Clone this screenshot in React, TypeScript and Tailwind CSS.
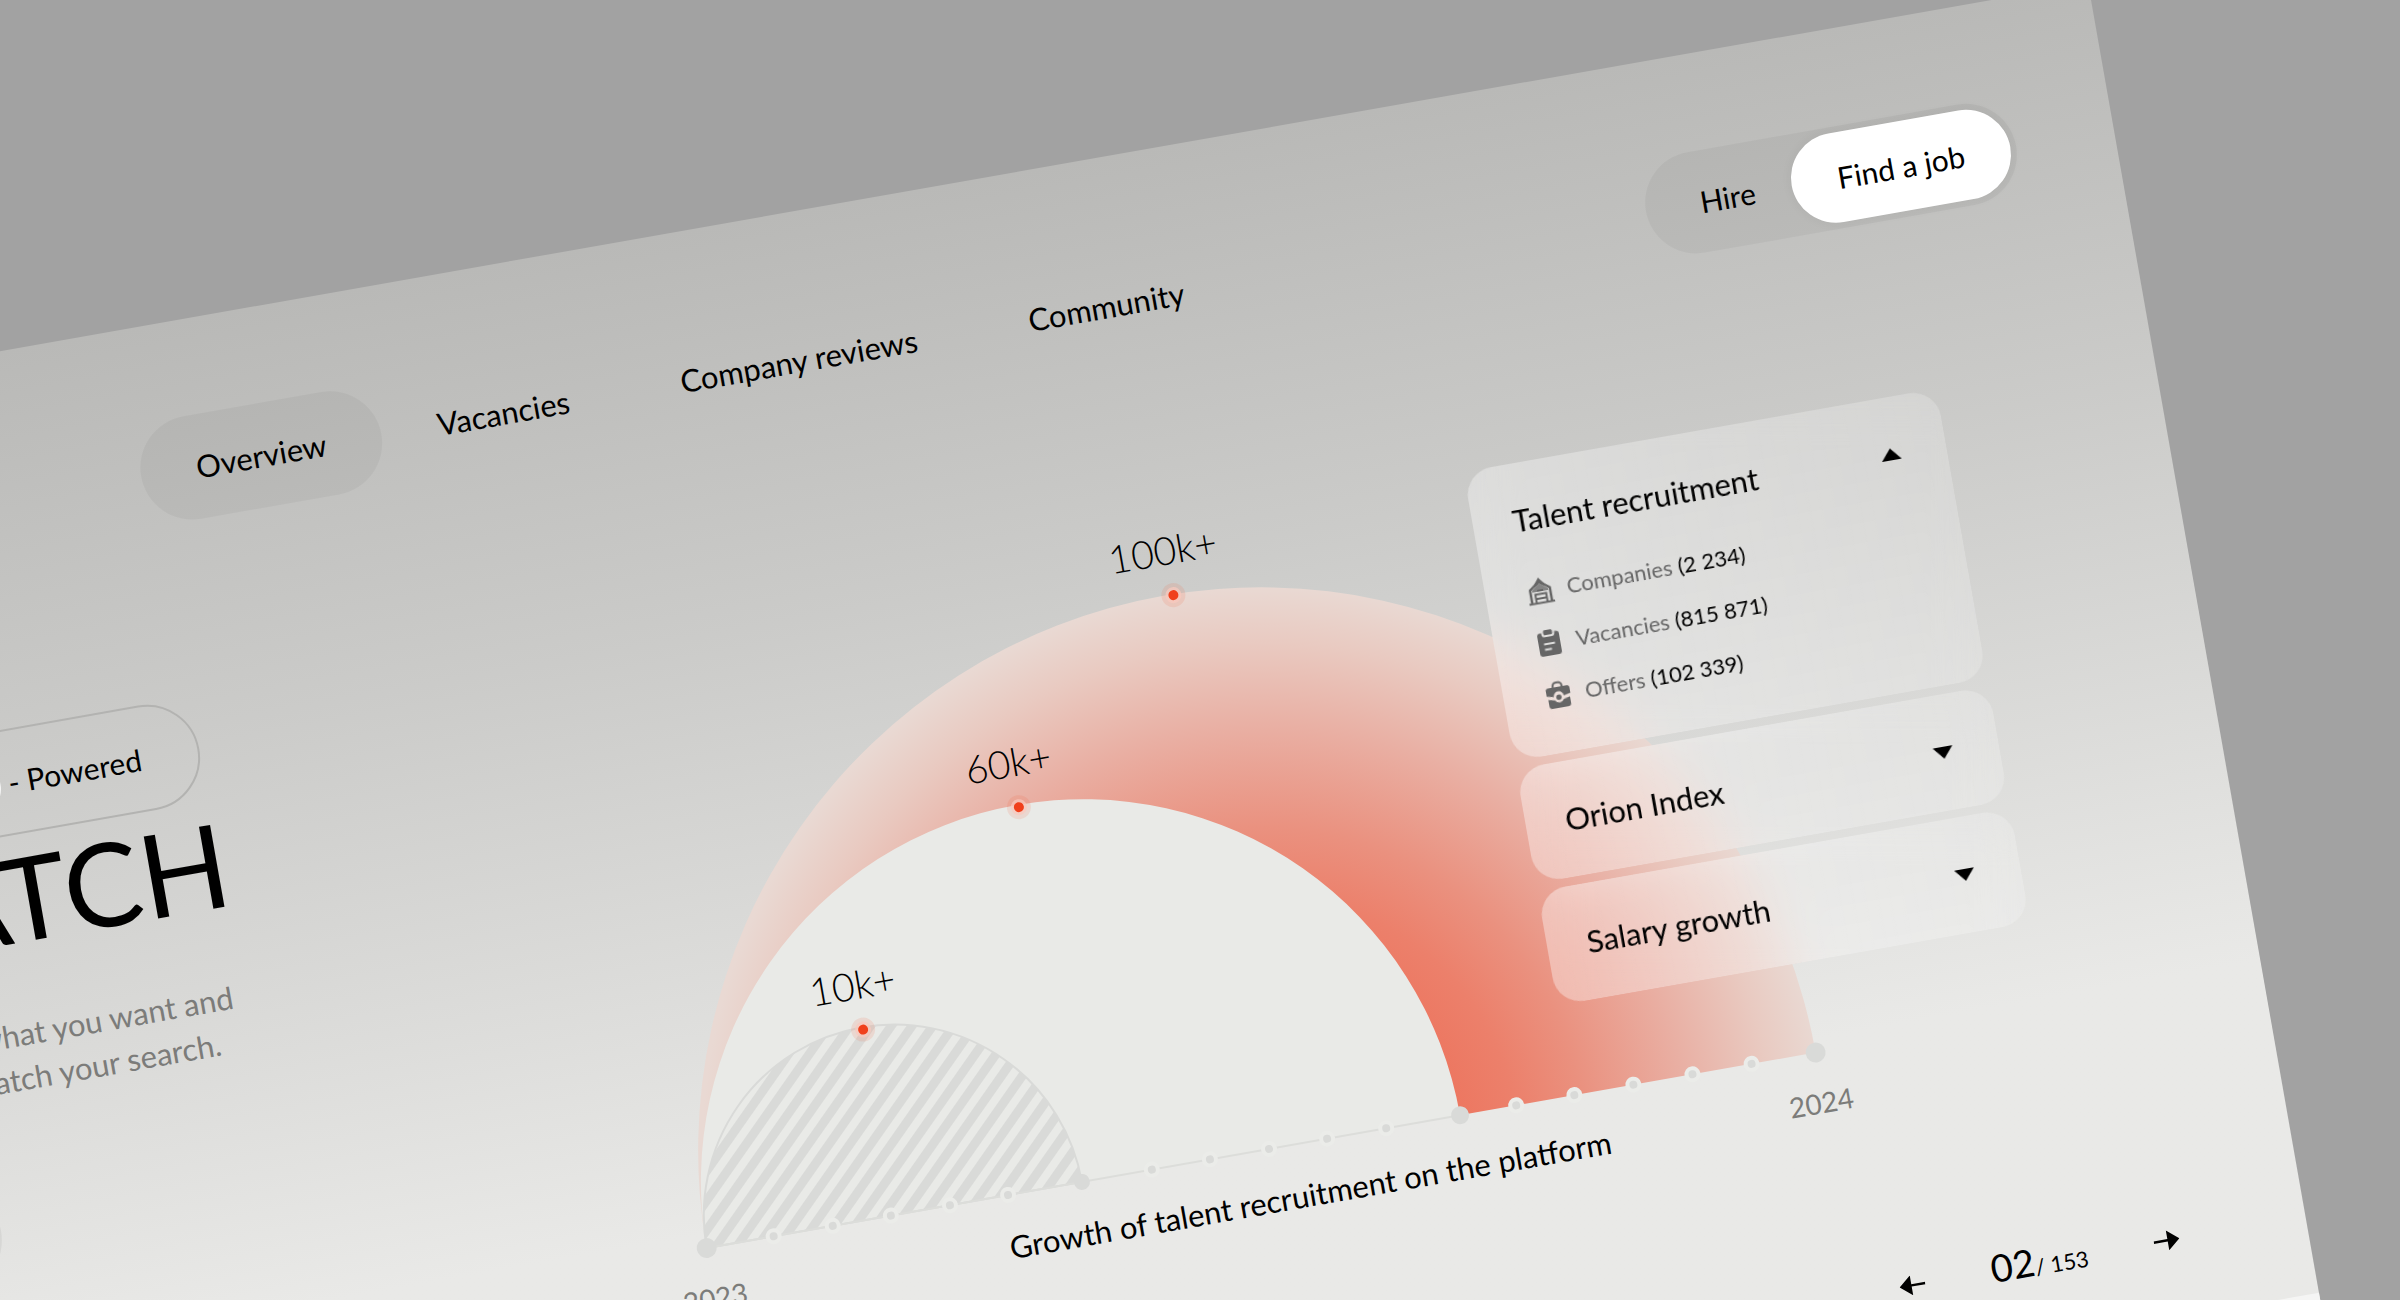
const navItems = ["Overview", "Vacancies", "Company reviews", "Community"];

const arcs = [
  { label: "10k+", x: 229, y: 445 },
  { label: "60k+", x: 421, y: 253 },
  { label: "100k+", x: 610, y: 71 },
];

const minorTicks = [105, 165, 224, 284, 343, 489, 548, 608, 667, 727, 859, 918, 978, 1038, 1098];

const majorTicks = [
  { x: 37, r: 10 },
  { x: 418, r: 8 },
  { x: 802, r: 9 },
  { x: 1163, r: 10 },
];

const CompaniesIcon = () => (
  <svg viewBox="0 0 26 28" className="h-7 w-[26px]" fill="none" aria-hidden="true">
    <path d="M3 27V12.500L13 5l10 7.500V27" stroke="currentColor" strokeWidth="2.500" />
    <path d="M8 7.500 13 1l5 6.500v3L13 7l-5 3.500z" fill="currentColor" />
    <path d="M13 7 5 13v2h16v-2z" fill="currentColor" opacity=".75" />
    <path d="M7.500 27v-9.500h11V27M7.500 22h11M10 14h6" stroke="currentColor" strokeWidth="2" />
    <path d="M0 26.500h26" stroke="currentColor" strokeWidth="2" />
  </svg>
);

const VacanciesIcon = () => (
  <svg viewBox="0 0 26 28" className="h-7 w-[26px]" aria-hidden="true">
    <path
      d="M5 3.500h1.500V5A3 3 0 0 0 9.500 8h7a3 3 0 0 0 3-3V3.500H21a3 3 0 0 1 3 3V24a3 3 0 0 1-3 3H5a3 3 0 0 1-3-3V6.500a3 3 0 0 1 3-3z"
      fill="currentColor"
    />
    <rect x="8.500" y="1" width="9" height="5" rx="1.500" fill="currentColor" />
    <path d="M7.500 15h11M7.500 20.500h7" stroke="#dcdcdb" strokeWidth="2" />
  </svg>
);

const OffersIcon = () => (
  <svg viewBox="0 0 26 28" className="h-7 w-[26px]" fill="none" aria-hidden="true">
    <path d="M8.500 7V5a3.500 3.500 0 0 1 3.500-3.500h2A3.500 3.500 0 0 1 17.500 5v2" stroke="currentColor" strokeWidth="2" />
    <path d="M3.500 6h19A2.500 2.500 0 0 1 25 8.500V14l-7 1.500a5 5 0 0 0-10 0L1 14V8.500A2.500 2.500 0 0 1 3.500 6z" fill="currentColor" />
    <path d="M2 17.500 8.500 19a5 5 0 0 0 9 0l6.500-1.500V24a3 3 0 0 1-3 3H5a3 3 0 0 1-3-3z" fill="currentColor" />
    <circle cx="13" cy="16.500" r="2.700" fill="currentColor" />
  </svg>
);

const Caret = ({ up }: { up?: boolean }) => (
  <svg viewBox="0 0 20 12" className="h-3 w-5" fill="currentColor" aria-hidden="true">
    <path d={up ? "M10 0 20 12H0z" : "M0 0h20L10 12z"} />
  </svg>
);

const PagerArrow = ({ left }: { left?: boolean }) => (
  <svg viewBox="0 0 26 20" className="h-5 w-[26px]" fill="currentColor" aria-hidden="true">
    <path d={left ? "M0 10 12 0v8.800h14v2.400H12V20z" : "M26 10 14 0v8.800H0v2.400h14V20z"} />
  </svg>
);

const stats = [
  { name: "Companies", count: "(2 234)", icon: <CompaniesIcon /> },
  { name: "Vacancies", count: "(815 871)", icon: <VacanciesIcon /> },
  { name: "Offers", count: "(102 339)", icon: <OffersIcon /> },
];

const cardClass = "rounded-[28px] bg-linear-to-r from-white/35 to-white/20 backdrop-blur-xl";

const Header = () => {
  return (
    <header className="flex items-center justify-between pt-24 pl-[397px] pr-[99px]">
      <nav className="flex gap-px">
        {navItems.map((item, i) => (
          <a
            key={item}
            href="#"
            className={
              i === 0
                ? "flex h-[104px] items-center rounded-full bg-black/4 px-14"
                : "flex h-[104px] items-center px-14"
            }
          >
            {item}
          </a>
        ))}
      </nav>
      <div className="flex rounded-full bg-black/4 p-[6px]">
        <button type="button" className="h-[90px] w-[142px] rounded-full pl-3 text-[30px]">
          Hire
        </button>
        <button
          type="button"
          className="h-[90px] w-[222px] rounded-full bg-white text-[30px] shadow-[0_0_12px_rgba(0,0,0,0.05)]"
        >
          Find a job
        </button>
      </div>
    </header>
  );
};

const Intro = () => {
  return (
    <section className="flex w-[407px] shrink-0 flex-col items-end">
      <p className="flex h-[106px] items-center gap-2 rounded-full border-2 border-[#b3b3b1] pr-[57px] pl-6 text-[30px]">
        <span className="flex size-16 items-center justify-center rounded-full bg-white">AI</span>
        <span>- Powered</span>
      </p>
      <h1 className="mt-[5px] -mr-2 text-[116px] leading-[116px]">MATCH</h1>
      <p className="mt-[54px] mr-[10px] leading-[44px] whitespace-nowrap text-[#7c7c7a]">
        Say what you want and
        <br />
        AI match your search.
      </p>
      <button
        type="button"
        aria-label="Start search"
        className="mt-[72px] h-[106px] w-32 self-start rounded-full bg-black/5"
      />
    </section>
  );
};

const GrowthChart = () => {
  return (
    <svg viewBox="0 0 1200 717" className="w-[1200px] shrink-0" role="img" aria-label="Growth of talent recruitment">
      <defs>
        <radialGradient id="glow" gradientUnits="userSpaceOnUse" cx="604" cy="633" r="563">
          <stop offset="0.3" stopColor="#ed735c" />
          <stop offset="0.45" stopColor="#ec806b" />
          <stop offset="0.57" stopColor="#ea917f" />
          <stop offset="0.75" stopColor="#e9afa3" />
          <stop offset="0.9" stopColor="#e9cac1" />
          <stop offset="1" stopColor="#e9d9d3" />
        </radialGradient>
        <pattern id="stripes" width="17" height="17" patternUnits="userSpaceOnUse" patternTransform="rotate(45)">
          <rect width="9" height="17" fill="#d9dad8" />
        </pattern>
      </defs>

      <path d="M37 633a563 563 0 0 1 1126 0z" fill="url(#glow)" />
      <path d="M37 633a382.500 382.500 0 0 1 765 0z" fill="#e9eae7" />
      <path d="M37 633a190.500 190.500 0 0 1 381 0z" fill="url(#stripes)" stroke="#d9dad8" strokeWidth="2" />
      <path d="M37 633h765" stroke="#dcddda" strokeWidth="2" />

      {minorTicks.map((x) => (
        <circle key={x} cx={x} cy="633" r="6" fill="#d9dad8" stroke="#ebece9" strokeWidth="4" />
      ))}
      {majorTicks.map((t) => (
        <circle key={t.x} cx={t.x} cy="633" r={t.r} fill="#d9dad8" />
      ))}

      {arcs.map((a) => (
        <g key={a.label}>
          <circle cx={a.x} cy={a.y} r="12" fill="#f4502c" opacity=".12" />
          <circle cx={a.x} cy={a.y} r="8" fill="#f9c9bd" opacity=".7" />
          <circle cx={a.x} cy={a.y} r="5" fill="#f0401c" />
          <text x={a.x - 3} y={a.y - 31} textAnchor="middle" className="text-[39px] font-light">
            {a.label}
          </text>
        </g>
      ))}

      <text x="37" y="694" textAnchor="middle" fill="#7c7c7a" className="text-[28px]">
        2023
      </text>
      <text x="641" y="697" textAnchor="middle" className="text-[31px]">
        Growth of talent recruitment on the platform
      </text>
      <text x="1160" y="694" textAnchor="middle" fill="#7c7c7a" className="text-[28px]">
        2024
      </text>
    </svg>
  );
};

const StatsPanel = () => {
  return (
    <aside className="-ml-[283px] flex w-[480px] shrink-0 flex-col gap-2">
      <div className={cardClass}>
        <button type="button" aria-expanded="true" className="flex h-[114px] w-full items-center justify-between pr-[46px] pl-10">
          Talent recruitment
          <Caret up />
        </button>
        <ul className="flex flex-col gap-[21px] pb-[42px] pl-[42px] text-[22px] leading-8">
          {stats.map((s) => (
            <li key={s.name} className="flex h-8 items-center gap-[14px] text-[#666]">
              {s.icon}
              <p>
                {s.name} <span className="text-black">{s.count}</span>
              </p>
            </li>
          ))}
        </ul>
      </div>
      {["Orion Index", "Salary growth"].map((title) => (
        <div key={title} className={cardClass}>
          <button type="button" aria-expanded="false" className="flex h-[116px] w-full items-center justify-between pr-[46px] pl-10">
            {title}
            <Caret />
          </button>
        </div>
      ))}
    </aside>
  );
};

const Pager = () => {
  return (
    <div className="mt-[138px] flex justify-end pr-32">
      <div className="flex h-12 w-[284px] items-center justify-between">
        <button type="button" aria-label="Previous">
          <PagerArrow left />
        </button>
        <p className="text-[22px] leading-[48px]">
          <span className="text-[38px]">02</span>/ 153
        </p>
        <button type="button" aria-label="Next">
          <PagerArrow />
        </button>
      </div>
    </div>
  );
};

export default function App() {
  return (
    <div className="h-screen overflow-hidden bg-[#a2a2a2]">
      <div className="-mt-[17px] mr-[13%] -ml-[13%] origin-top-right -rotate-10 bg-linear-to-b from-[#b9b9b7] from-0% via-[#cbcbc9] via-26% to-[#e9e9e7] to-64% font-['Lato',sans-serif] text-[31px] leading-10 text-black">
        <Header />
        <main className="mt-[173px] flex items-start pr-[220px]">
          <Intro />
          <div className="flex-1" />
          <GrowthChart />
          <StatsPanel />
        </main>
        <Pager />
        <footer className="mt-[54px] h-[220px] bg-[#f5f5f4]" />
      </div>
    </div>
  );
}
